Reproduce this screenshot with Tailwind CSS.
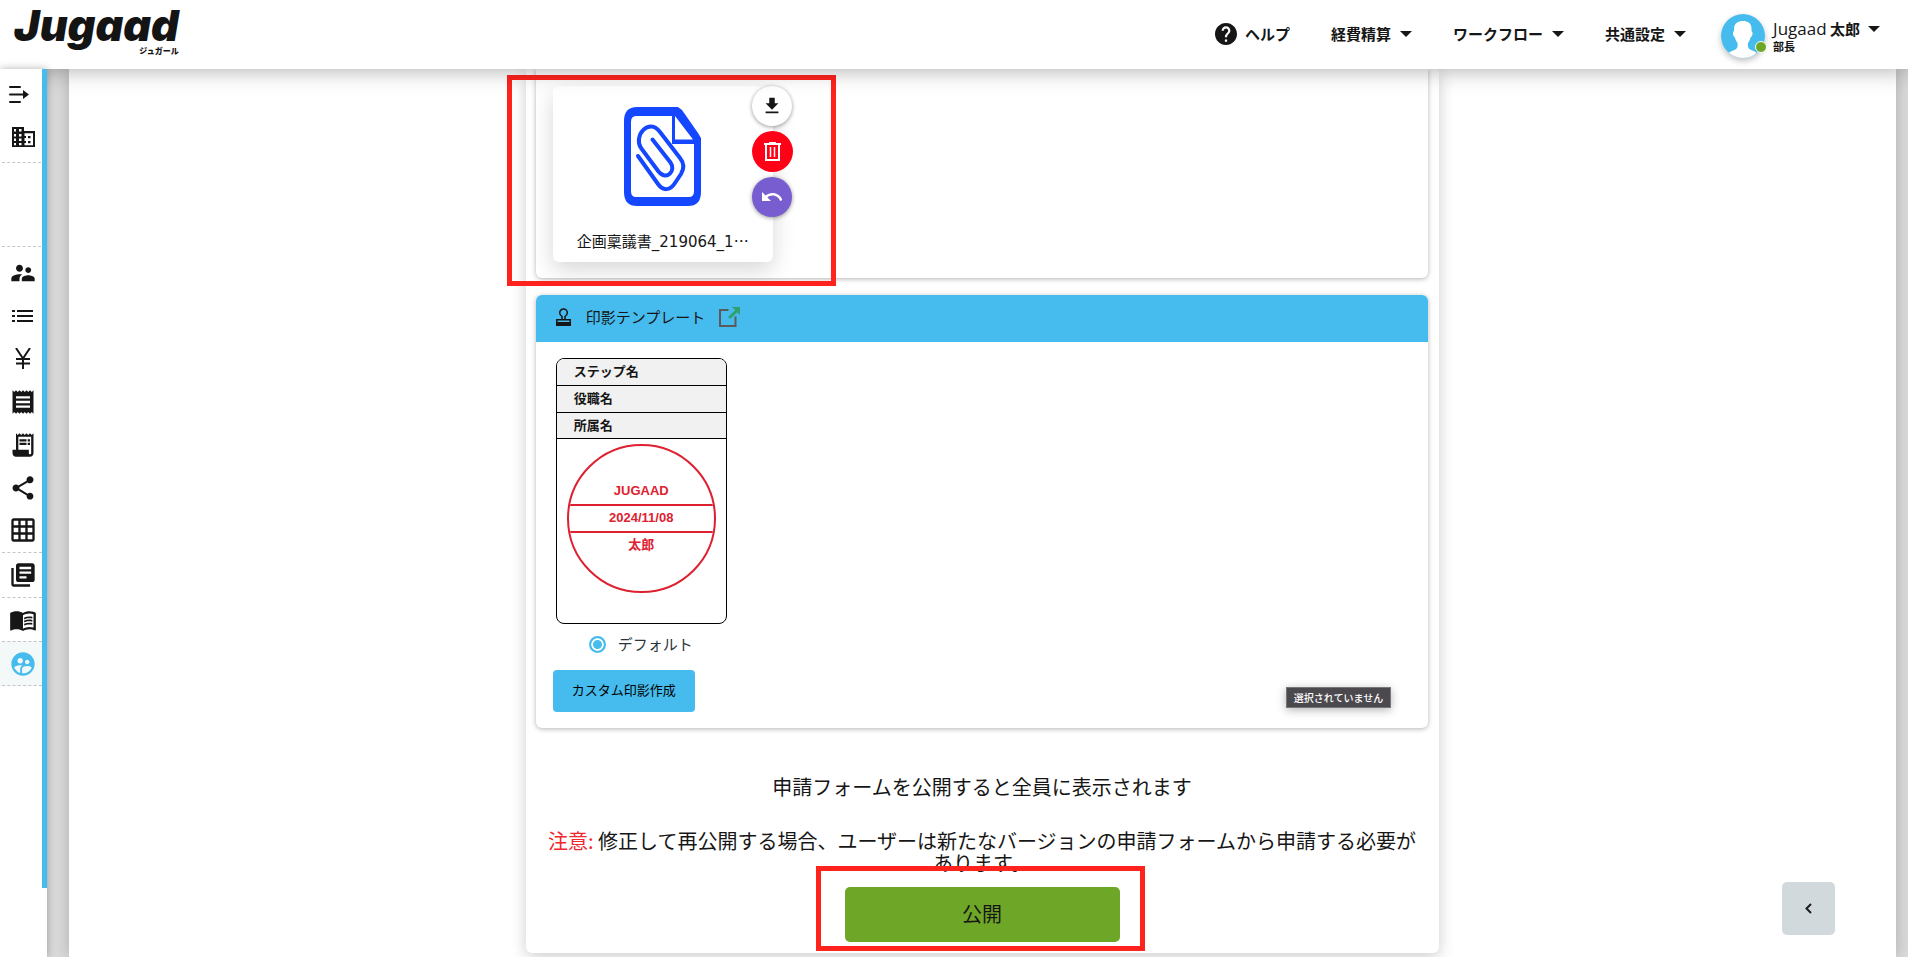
<!DOCTYPE html>
<html lang="ja">
<head>
  <meta charset="UTF-8">
  <meta name="viewport" content="width=device-width, initial-scale=1.0">
  <title>Jugaad - 申請フォーム</title>
  <script src="https://cdn.jsdelivr.net/npm/@tailwindcss/browser@4"></script>
</head>
<body class="h-screen flex flex-col overflow-hidden bg-white text-[#161616] font-['Noto_Sans_CJK_JP',sans-serif]">

  <!-- Header -->
  <header class="relative z-20 h-[69px] shrink-0 flex items-start justify-between bg-white pl-[14px] pr-7 shadow-[0_0_22px_rgba(0,0,0,0.35)]">
    <a href="#" class="flex flex-col items-end pt-1 text-[#141414]">
      <span class="font-['Inter',sans-serif] text-[43px] leading-[42px] font-black italic">Jugaad</span>
      <span class="text-[8px] leading-[10px] font-black">ジュガール</span>
    </a>
    <div class="flex items-start">
      <nav class="flex items-center gap-[41px] pt-[22px] mr-[35px] text-[15px] leading-6 font-bold">
        <a href="#" class="flex items-center gap-2">
          <svg class="w-[22px] h-[22px]" viewBox="2 2 20 20" fill="currentColor"><path d="M12 2C6.48 2 2 6.48 2 12s4.48 10 10 10 10-4.48 10-10S17.52 2 12 2zm1 17h-2v-2h2v2zm2.07-7.75l-.9.92C13.45 12.9 13 13.5 13 15h-2v-.5c0-1.1.45-2.1 1.17-2.83l1.24-1.26c.37-.36.59-.86.59-1.41 0-1.1-.9-2-2-2s-2 .9-2 2H8c0-2.21 1.79-4 4-4s4 1.79 4 4c0 .88-.36 1.68-.93 2.25z"/></svg>
          ヘルプ
        </a>
        <button type="button" class="flex items-center gap-[9px]">経費精算
          <svg class="w-3 h-[6px]" viewBox="0 0 12 6" fill="currentColor"><path d="M0 0h12L6 6z"/></svg>
        </button>
        <button type="button" class="flex items-center gap-[9px]">ワークフロー
          <svg class="w-3 h-[6px]" viewBox="0 0 12 6" fill="currentColor"><path d="M0 0h12L6 6z"/></svg>
        </button>
        <button type="button" class="flex items-center gap-[9px]">共通設定
          <svg class="w-3 h-[6px]" viewBox="0 0 12 6" fill="currentColor"><path d="M0 0h12L6 6z"/></svg>
        </button>
      </nav>
      <button type="button" class="flex items-start gap-2 pt-[14px] text-left">
        <span class="relative">
          <svg class="w-11 h-11 rounded-full shadow-[0_3px_6px_rgba(0,0,0,0.25)]" viewBox="0 0 44 44">
            <rect width="44" height="44" fill="#46bbed"/>
            <path d="M22 7c5 0 8 2 8.500 7v3c.8.500 1.200 1.500 1 3-.3 2-1 3-2 3.500-.4 2.500-1.500 4-2.500 5.500-.6 4 .5 6 3 7 2 .8 4 1.500 5.500 2.500L31 44H13L8 38.500c1.500-1 3.500-1.700 5.500-2.500 2.500-1 3.600-3 3-7-1-1.500-2.100-3-2.500-5.500-1-.5-1.700-1.500-2-3.500-.2-1.500.2-2.500 1-3v-2.500C13.500 9 17 7 22 7z" fill="#fff"/>
          </svg>
          <span class="absolute -right-[2px] bottom-[5px] w-3 h-3 rounded-full bg-[#6ea728] border border-white"></span>
        </span>
        <span class="flex flex-col pt-1">
          <span class="flex items-center gap-2 text-[15px] leading-[22px] font-bold">
            <span><span class="font-['Open_Sans',sans-serif] text-[17px] leading-[22px] font-normal">Jugaad</span> 太郎</span>
            <svg class="w-3 h-[6px]" viewBox="0 0 12 6" fill="currentColor"><path d="M0 0h12L6 6z"/></svg>
          </span>
          <span class="text-[11px] leading-3 font-bold">部長</span>
        </span>
      </button>
    </div>
  </header>

  <div class="flex-1 min-h-0 flex bg-[#d9d9d9]">

    <!-- Sidebar -->
    <aside class="relative z-30 w-[47px] shrink-0 bg-white shadow-[0_0_8px_rgba(0,0,0,0.3)]">
      <div class="h-[calc(100%-69px)] border-r-[5px] border-[#46bbed] pt-1">
        <ul class="flex flex-col">
          <li><a href="#" aria-label="メニューを開く" class="h-[43px] flex items-center pl-[9px]">
            <svg class="w-5 h-5" viewBox="0 0 20 20" fill="none" stroke="currentColor" stroke-width="2" stroke-linecap="round"><path d="M1 2h10M1 9.500h14M1 17h10"/><path d="M14 5l6 4.500-6 4.500z" fill="currentColor" stroke="none"/></svg>
          </a></li>
          <li><a href="#" aria-label="会社" class="h-[42px] flex items-center pl-[11px]">
            <svg class="w-6 h-6" viewBox="0 0 24 24" fill="currentColor"><path fill-rule="evenodd" d="M1 2h12v4h11v16H1zM3 4v2.500h2V4zm5 0v2.500h2.500V4zM3 9v2.500h2V9zm5 0v2.500h2.500V9zM3 13.500V16h2v-2.500zm5 0V16h2.500v-2.500zM3 18v2.200h2V18zm5 0v2.200h2.500V18zm5.500-9.700V11H15v2h-1.500v3H15v2h-1.500v2.200H22V8.300zM17 11h2.500v2.200H17zm0 5h2.500v2.200H17z"/></svg>
          </a></li>
          <li class="h-[85px] my-1 ml-[2px] mr-[1px] border-y border-dashed border-[#c6c6c6]"></li>
          <li><a href="#" aria-label="ユーザー" class="h-[43px] flex items-center pl-[9px]">
            <svg class="w-7 h-7" viewBox="0 0 24 24" fill="currentColor"><path d="M16.500 12c1.380 0 2.490-1.120 2.490-2.500S17.880 7 16.500 7C15.120 7 14 8.120 14 9.500s1.120 2.500 2.500 2.500zM9 11c1.660 0 2.990-1.340 2.990-3S10.660 5 9 5C7.340 5 6 6.340 6 8s1.340 3 3 3zm7.500 3c-1.830 0-5.500.92-5.500 2.750V19h11v-2.250c0-1.830-3.670-2.750-5.500-2.750zM9 13c-2.330 0-7 1.170-7 3.500V19h7v-2.250c0-.85.33-2.340 2.370-3.470C10.500 13.100 9.660 13 9 13z"/></svg>
          </a></li>
          <li><a href="#" aria-label="一覧" class="h-[43px] flex items-center pl-[12px]">
            <svg class="w-[22px] h-[14px]" viewBox="0 0 22 14" fill="currentColor"><path d="M0 1h3v2H0zM0 6h3v2H0zM0 11h3v2H0zM5 1h16v2H5zM5 6h16v2H5zM5 11h16v2H5z"/></svg>
          </a></li>
          <li><a href="#" aria-label="経費" class="h-[43px] flex items-center pl-[15px]">
            <svg class="w-4 h-[21px]" viewBox="0 0 16 21" fill="none" stroke="currentColor" stroke-width="2"><path d="M1 0l7 10.500L15 0M8 10v11M1 11h14M1 15.500h14"/></svg>
          </a></li>
          <li><a href="#" aria-label="領収書" class="h-[43px] flex items-center pl-[9px]">
            <svg class="w-7 h-7" viewBox="0 0 24 24" fill="currentColor"><path d="M18 17H6v-2h12v2zm0-4H6v-2h12v2zm0-4H6V7h12v2zM3 22l1.500-1.500L6 22l1.500-1.500L9 22l1.500-1.500L12 22l1.500-1.500L15 22l1.500-1.500L18 22l1.500-1.500L21 22V2l-1.500 1.500L18 2l-1.500 1.500L15 2l-1.500 1.500L12 2l-1.500 1.500L9 2 7.500 3.500 6 2 4.500 3.500 3 2v20z"/></svg>
          </a></li>
          <li><a href="#" aria-label="明細" class="h-[43px] flex items-center pl-[9px]">
            <svg class="w-7 h-7" viewBox="0 0 24 24" fill="currentColor"><path d="M19.500 3.500L18 2l-1.500 1.500L15 2l-1.500 1.500L12 2l-1.500 1.500L9 2 7.500 3.500 6 2v14H3v3c0 1.660 1.340 3 3 3h12c1.660 0 3-1.340 3-3V2l-1.500 1.500zM19 19c0 .55-.45 1-1 1s-1-.45-1-1v-3H8V5h11v14z"/><path d="M9 7h6v2H9zM16 7h2v2h-2zM9 10h6v2H9zM16 10h2v2h-2z"/></svg>
          </a></li>
          <li><a href="#" aria-label="共有" class="h-[43px] flex items-center pl-[9px]">
            <svg class="w-7 h-7" viewBox="0 0 24 24" fill="currentColor"><path d="M18 16.080c-.76 0-1.440.3-1.960.77L8.910 12.700c.05-.23.09-.46.09-.7s-.04-.47-.09-.7l7.050-4.110c.54.5 1.250.81 2.040.81 1.660 0 3-1.340 3-3s-1.340-3-3-3-3 1.340-3 3c0 .24.040.47.09.7L8.040 9.810C7.500 9.310 6.790 9 6 9c-1.660 0-3 1.340-3 3s1.340 3 3 3c.79 0 1.500-.31 2.040-.81l7.120 4.160c-.05.21-.08.43-.08.650 0 1.610 1.310 2.920 2.920 2.920s2.920-1.310 2.920-2.920-1.310-2.920-2.920-2.920z"/></svg>
          </a></li>
          <li><a href="#" aria-label="テーブル" class="h-[42px] flex items-center pl-[9px]">
            <svg class="w-7 h-7" viewBox="0 0 24 24" fill="currentColor"><path d="M20 2H4c-1.100 0-2 .9-2 2v16c0 1.100.9 2 2 2h16c1.100 0 2-.9 2-2V4c0-1.100-.9-2-2-2zM8 20H4v-4h4v4zm0-6H4v-4h4v4zm0-6H4V4h4v4zm6 12h-4v-4h4v4zm0-6h-4v-4h4v4zm0-6h-4V4h4v4zm6 12h-4v-4h4v4zm0-6h-4v-4h4v4zm0-6h-4V4h4v4z"/></svg>
          </a></li>
          <li class="ml-[2px] mt-[1px] border-t border-dashed border-[#c6c6c6]"><a href="#" aria-label="ライブラリ" class="h-11 flex items-center pl-[7px]">
            <svg class="w-7 h-7" viewBox="0 0 24 24" fill="currentColor"><path d="M4 6H2v14c0 1.100.9 2 2 2h14v-2H4V6zm16-4H8c-1.100 0-2 .9-2 2v12c0 1.100.9 2 2 2h12c1.100 0 2-.9 2-2V4c0-1.100-.9-2-2-2zm-1 9H9V9h10v2zm-4 4H9v-2h6v2zm4-8H9V5h10v2z"/></svg>
          </a></li>
          <li class="ml-[2px] border-t border-dashed border-[#c6c6c6]"><a href="#" aria-label="マニュアル" class="h-[43px] flex items-center pl-[7px]">
            <svg class="w-7 h-7" viewBox="0 0 24 24" fill="currentColor"><path d="M21 5c-1.110-.35-2.330-.5-3.500-.5-1.950 0-4.050.4-5.500 1.500-1.450-1.100-3.550-1.500-5.500-1.500S2.450 4.900 1 6v14.650c0 .25.25.5.5.5.1 0 .15-.05.25-.05C3.100 20.450 5.050 20 6.500 20c1.950 0 4.050.4 5.500 1.500 1.350-.85 3.800-1.500 5.500-1.500 1.650 0 3.350.3 4.750 1.050.1.05.15.05.25.05.25 0 .5-.25.5-.5V6c-.6-.45-1.250-.75-2-1zm0 13.500c-1.100-.35-2.300-.5-3.500-.5-1.700 0-4.150.65-5.500 1.500V8c1.350-.85 3.800-1.500 5.500-1.500 1.200 0 2.400.15 3.500.5v11.500z"/><path d="M17.500 10.500c.88 0 1.730.09 2.500.26V9.240c-.79-.15-1.640-.24-2.500-.24-1.700 0-3.240.29-4.500.83v1.660c1.130-.64 2.700-.99 4.500-.99zM13 12.490v1.660c1.130-.64 2.700-.99 4.500-.99.88 0 1.730.09 2.500.26V11.900c-.79-.15-1.640-.24-2.500-.24-1.700 0-3.240.3-4.500.83zM17.500 14.330c-1.700 0-3.240.29-4.500.83v1.660c1.130-.64 2.700-.99 4.500-.99.88 0 1.730.09 2.500.26v-1.520c-.79-.16-1.640-.24-2.500-.24z"/></svg>
          </a></li>
          <li class="pl-[2px] bg-[#f3f8f8]"><a href="#" aria-label="グループ" class="h-[45px] flex items-center pl-[7px] border-y border-dashed border-[#c6c6c6] text-[#46bbed]">
            <svg class="w-7 h-7" viewBox="0 0 24 24" fill="currentColor"><path d="M12 2C6.480 2 2 6.480 2 12s4.480 10 10 10 10-4.480 10-10S17.520 2 12 2zm3.610 6.340c1.070 0 1.930.86 1.930 1.930 0 1.070-.86 1.930-1.930 1.930-1.070 0-1.930-.86-1.930-1.930-.01-1.070.86-1.930 1.930-1.930zm-6-1.580c1.300 0 2.360 1.060 2.360 2.360 0 1.300-1.060 2.360-2.360 2.360s-2.360-1.060-2.360-2.360c0-1.310 1.050-2.360 2.360-2.360zm0 9.130v3.750c-2.400-.75-4.300-2.600-5.140-4.960 1.050-1.120 3.670-1.690 5.140-1.690.53 0 1.200.08 1.900.22-1.640.87-1.900 2.020-1.900 2.680zM12 20c-.27 0-.53-.01-.79-.04v-4.070c0-1.420 2.940-2.130 4.400-2.130 1.070 0 2.920.39 3.840 1.150C18.280 17.880 15.390 20 12 20z"/></svg>
          </a></li>
        </ul>
      </div>
    </aside>

    <!-- Content -->
    <main class="relative flex-1 min-w-0 ml-[22px] mr-3 bg-white shadow-[0_0_14px_rgba(0,0,0,0.2)]">
      <div class="w-1/2 mx-auto pl-[10px] pr-[11px] pb-[11px] bg-white rounded-b-md shadow-[0_4px_16px_rgba(0,0,0,0.2)]">

        <section class="pt-[17px] pb-4 pl-[17px] rounded-b-md shadow-[0_1px_5px_rgba(0,0,0,0.3)]">
          <div class="relative w-[220px] h-[176px] flex flex-col items-center justify-between pt-[21px] pb-2 rounded-md bg-white shadow-[0_8px_22px_rgba(0,0,0,0.16)]">
            <svg class="w-[77px] h-[99px]" viewBox="0 0 77 99" fill="none">
              <path d="M13 0h41l4 3 16 23 3 5v54q0 14-13 14H13Q0 99 0 85V14Q0 0 13 0z" fill="#1447ff"/>
              <path d="M12 9h36v28h22v47q0 6-5 6H12q-5 0-5-6V15q0-6 5-6zM51 9l18 23.500H51z" fill="#fff"/>
              <path d="M28.500 32.500L46.500 55.500c6 8-4 19-12 9L17 41C9 29 25 10 36 25l20 26c4 5 4 11 1 16l-6 9c-5 8-12 8-17 1L14 49" stroke="#1447ff" stroke-width="4" stroke-linecap="round" stroke-linejoin="round"/>
            </svg>
            <p class="text-[15px] leading-6 font-['DejaVu_Sans','Noto_Sans_CJK_JP',sans-serif]">企画稟議書_219064_1<span class="font-['Noto_Sans_CJK_JP',sans-serif]">…</span></p>
            <div class="absolute left-[199px] top-0 flex flex-col gap-[5px]">
              <button type="button" aria-label="ダウンロード" class="w-10 h-10 rounded-full flex items-center justify-center bg-white shadow-[0_1px_4px_rgba(0,0,0,0.4)]">
                <svg class="w-[22px] h-[22px]" viewBox="0 0 24 24" fill="currentColor"><path d="M19 9h-4V3H9v6H5l7 7 7-7zM5 18v2h14v-2H5z"/></svg>
              </button>
              <button type="button" aria-label="削除" class="w-[41px] h-[41px] rounded-full flex items-center justify-center bg-[#ff0016] text-white">
                <svg class="w-[17px] h-[19px]" viewBox="0 0 17 19" fill="none" stroke="currentColor" stroke-width="2"><path d="M0 2h17M5 1h7M2 2v16h13V2"/><path d="M6.500 5v10M10.500 5v10" stroke-width="1.500"/></svg>
              </button>
              <button type="button" aria-label="元に戻す" class="w-10 h-10 rounded-full flex items-center justify-center bg-[#775dd0] text-white shadow-[0_1px_4px_rgba(0,0,0,0.4)]">
                <svg class="w-5 h-5" viewBox="2 2 20 20" fill="currentColor"><path d="M12.500 8c-2.650 0-5.050.99-6.900 2.600L2 7v9h9l-3.620-3.620c1.390-1.160 3.160-1.880 5.120-1.880 3.540 0 6.550 2.310 7.600 5.500l2.370-.78C21.080 11.030 17.150 8 12.500 8z"/></svg>
              </button>
            </div>
            <div class="absolute -left-[46px] -top-[11px] w-[329px] h-[211px] border-[5px] border-[#ff231d] pointer-events-none"></div>
          </div>
        </section>

        <section class="mt-[17px] rounded-md overflow-hidden shadow-[0_1px_5px_rgba(0,0,0,0.3)]">
          <h2 class="h-[47px] flex items-center pl-5 pb-1 bg-[#46bbed] text-[15px] leading-6">
            <svg class="w-[15px] h-[18px]" viewBox="0 0 15 18" fill="none" stroke="currentColor" stroke-width="1.500"><path d="M6 11V8.500C4.500 7.500 3.700 6 3.700 4.800a3.800 3.800 0 017.600 0c0 1.200-.8 2.700-2.300 3.700V11"/><path d="M.8 15v-3.200h13.400V15"/><path d="M0 14h15v4H0z" fill="currentColor" stroke="none"/></svg>
            <span class="ml-[15px]">印影テンプレート</span>
            <a href="#" aria-label="新しいタブで開く" class="ml-[14px]">
              <svg class="w-[21px] h-5" viewBox="0 0 21 20" fill="none"><path d="M9.500 3H1v16h15.500V9.500" stroke="#5b5b5b" stroke-width="2"/><path d="M10 11L17.500 4" stroke="#2fa06c" stroke-width="3"/><path d="M13.500 0H21v7.500z" fill="#2fa06c" stroke="#2fa06c" stroke-width="1"/></svg>
            </a>
          </h2>
          <div class="relative pt-4 pb-4 pl-[17px]">
            <div class="ml-[3px] w-[171px] h-[266px] rounded-lg border border-black overflow-hidden flex flex-col items-center">
              <ul class="w-full bg-[#f1f1f1] text-[13px] leading-6 font-bold">
                <li class="pl-[17px] pb-[2px] border-b border-black">ステップ名</li>
                <li class="pl-[17px] pb-[2px] border-b border-black">役職名</li>
                <li class="pl-[17px] pb-[1px] border-b border-black">所属名</li>
              </ul>
              <div class="mt-[5px] w-[149px] h-[149px] rounded-full border-2 border-[#de2130] overflow-hidden flex flex-col justify-center text-center text-[13px] leading-[23px] font-bold text-[#de2130] font-['Liberation_Sans','Noto_Sans_CJK_JP',sans-serif]">
                <span class="pb-[2px]">JUGAAD</span>
                <span class="pb-[2px] border-y-2 border-[#de2130]">2024/11/08</span>
                <span class="pb-[2px]">太郎</span>
              </div>
            </div>
            <label class="mt-2 ml-9 flex items-center gap-3 text-[15px] leading-6 text-[#2b3437]">
              <input type="radio" name="stamp" checked class="appearance-none w-[17px] h-[17px] rounded-full border-2 border-[#46bbed] bg-[#46bbed] shadow-[inset_0_0_0_2px_#fff]">
              デフォルト
            </label>
            <button type="button" class="mt-[14px] w-[142px] h-[42px] pb-[2px] rounded bg-[#46bbed] text-[13px] leading-5 text-black">カスタム印影作成</button>
            <span role="tooltip" class="absolute right-[37px] bottom-5 h-[21px] px-[7px] flex items-center bg-[#4b494e] border border-[#777] text-white text-[10px] leading-4 font-medium shadow-[0_2px_10px_rgba(0,0,0,0.3)]">選択されていません</span>
          </div>
        </section>

        <div class="pt-12 text-center text-[20px] leading-[22px]">
          <p>申請フォームを公開すると全員に表示されます</p>
          <p class="mt-8"><span class="text-[#f0282d]">注意:</span> 修正して再公開する場合、ユーザーは新たなバージョンの申請フォームから申請する必要が<br>あります。</p>
          <div class="relative w-[275px] mx-auto mt-[13px]">
            <button type="button" class="w-full h-[55px] pb-[2px] rounded-[5px] bg-[#6ea728]">公開</button>
            <div class="absolute -left-[29px] -top-[21px] w-[329px] h-[85px] border-[5px] border-[#ff231d] pointer-events-none"></div>
          </div>
        </div>
      </div>

      <button type="button" aria-label="パネルを開く" class="absolute right-[61px] bottom-[22px] w-[53px] h-[53px] rounded-[5px] flex items-center justify-center bg-[#d2d9dc]">
        <svg class="w-[7px] h-[11px]" viewBox="0 0 7 11" fill="none" stroke="#1c1c22" stroke-width="2"><path d="M6 1L1.500 5.500 6 10"/></svg>
      </button>
    </main>
  </div>
</body>
</html>
